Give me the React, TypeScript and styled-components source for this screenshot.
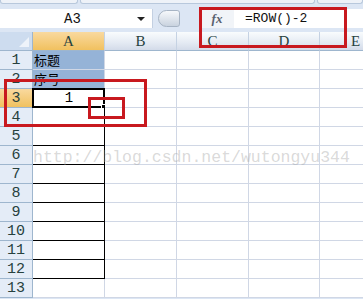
import styled, { createGlobalStyle } from "styled-components";

const GlobalStyle = createGlobalStyle`
  html, body {
    margin: 0;
    padding: 0;
    background: #ffffff;
  }
`;

const COLS = ["A", "B", "C", "D", "E"];
const ROWS = Array.from({ length: 13 }, (_, i) => i + 1);

const Frame = styled.div`
  position: relative;
  width: 363px;
  height: 299px;
  overflow: hidden;
  background: #dce6f4;
  font-family: "Liberation Mono", "DejaVu Sans Mono", monospace;
`;

const RibbonEdge = styled.div`
  display: flex;
  gap: 2px;
  height: 9px;
`;

const RibbonTab = styled.div<{ $w: number }>`
  width: ${(p) => p.$w}px;
  flex: ${(p) => (p.$w ? "none" : "1")};
  height: 3px;
  background: #eef2f8;
  border: 1px solid #b8c8dc;
  border-top: none;
  border-radius: 0 0 3px 3px;
`;

const FormulaBar = styled.div`
  display: flex;
  align-items: stretch;
  height: 19px;
`;

const NameBox = styled.div`
  width: 152px;
  display: flex;
  align-items: center;
  background: #ffffff;
  border-right: 1px solid #c3d0e2;
  font-size: 14px;
  color: #111;
`;

const NameText = styled.span`
  flex: 1;
  text-align: center;
  padding-left: 8px;
`;

const DropArrow = styled.span`
  width: 0;
  height: 0;
  margin-right: 7px;
  border-left: 4px solid transparent;
  border-right: 4px solid transparent;
  border-top: 4px solid #222;
`;

const Splitter = styled.div`
  width: 22px;
  height: 17px;
  margin: 1px 0 0 5px;
  border-radius: 9px 3px 3px 9px;
  background: linear-gradient(#f6f8fb, #c9d3df);
  border: 1px solid #a7b4c4;
  box-sizing: border-box;
`;

const FxButton = styled.div`
  width: 34px;
  margin-left: 20px;
  display: flex;
  align-items: center;
  justify-content: center;
  background: #f1f4f8;
  font-family: "Liberation Serif", serif;
  font-style: italic;
  font-weight: bold;
  font-size: 13px;
  color: #5a6270;
`;

const FormulaInput = styled.div`
  flex: 1;
  display: flex;
  align-items: center;
  padding-left: 11px;
  background: #ffffff;
  font-size: 13px;
  color: #111;
`;

const Gap = styled.div`
  height: 4px;
`;

const Sheet = styled.div`
  display: grid;
  grid-template-columns: 33px 72px 72px 72px 71px 72px;
  grid-auto-rows: 19px;
  background: #ffffff;
`;

const Corner = styled.div`
  position: relative;
  box-sizing: border-box;
  background: #cddcef;
  border-right: 1px solid #9eb6ce;
  border-bottom: 1px solid #9eb6ce;

  &::after {
    content: "";
    position: absolute;
    right: 3px;
    bottom: 3px;
    width: 10px;
    height: 10px;
    background: #eef3fa;
    clip-path: polygon(100% 0, 100% 100%, 0 100%);
  }
`;

const ColHeader = styled.div<{ $active?: boolean }>`
  box-sizing: border-box;
  display: flex;
  align-items: center;
  justify-content: center;
  font-family: "Liberation Serif", serif;
  font-size: 15px;
  color: #27413e;
  background: ${(p) =>
    p.$active
      ? "linear-gradient(#f9d99f, #f1c15f)"
      : "linear-gradient(#f9fcfd, #e4eaf3 60%, #d3dbe9)"};
  border-right: 1px solid #c5d2e3;
  border-bottom: 1px solid #9eb6ce;
`;

const RowHeader = styled.div<{ $active?: boolean }>`
  box-sizing: border-box;
  display: flex;
  align-items: center;
  justify-content: center;
  font-size: 15px;
  color: #27413e;
  background: ${(p) =>
    p.$active ? "linear-gradient(#f9d99f, #f1c15f)" : "#e4ecf7"};
  border-right: 1px solid #9eb6ce;
  border-bottom: 1px solid #9eb6ce;
`;

const Cell = styled.div<{ $fill?: string; $boxed?: boolean; $align?: string }>`
  position: relative;
  box-sizing: border-box;
  display: flex;
  align-items: center;
  justify-content: ${(p) => p.$align || "flex-start"};
  padding-left: 1px;
  color: #000;
  background: ${(p) => p.$fill || "#ffffff"};
  border-right: 1px solid ${(p) => (p.$boxed ? "#000" : "#d0d7e5")};
  border-bottom: 1px solid ${(p) => (p.$boxed ? "#000" : "#d0d7e5")};
`;

const CellText = styled.span`
  font-family: "Noto Sans CJK SC", sans-serif;
  font-size: 13px;
  line-height: 18px;
`;

const Selection = styled.div`
  position: absolute;
  left: -1px;
  top: -1px;
  right: -1px;
  bottom: -1px;
  border: 2px solid #000;
  pointer-events: none;

  &::after {
    content: "";
    position: absolute;
    right: -4px;
    bottom: -4px;
    width: 4px;
    height: 4px;
    background: #000;
    border: 1px solid #fff;
  }
`;

const CellValue = styled.span`
  font-family: "Liberation Mono", monospace;
  font-size: 14px;
`;

const Watermark = styled.div`
  position: absolute;
  left: 33px;
  top: 148px;
  font-family: "Liberation Mono", monospace;
  font-size: 16.5px;
  color: rgba(160, 160, 160, 0.4);
  white-space: nowrap;
  pointer-events: none;
`;

const Mark = styled.div<{ $x: number; $y: number; $w: number; $h: number }>`
  position: absolute;
  left: ${(p) => p.$x}px;
  top: ${(p) => p.$y}px;
  width: ${(p) => p.$w}px;
  height: ${(p) => p.$h}px;
  box-sizing: border-box;
  border: 3px solid #c8191f;
  pointer-events: none;
`;

function cellFor(row: number, col: string) {
  const key = col + row;
  if (col === "A") {
    if (row === 1)
      return (
        <Cell key={key} $fill="#95b3d7">
          <CellText>标题</CellText>
        </Cell>
      );
    if (row === 2)
      return (
        <Cell key={key} $fill="#95b3d7">
          <CellText>序号</CellText>
        </Cell>
      );
    if (row === 3)
      return (
        <Cell key={key} $boxed $align="center">
          <CellValue>1</CellValue>
          <Selection />
        </Cell>
      );
    if (row <= 12) return <Cell key={key} $boxed />;
  }
  return <Cell key={key} />;
}

export default function App() {
  return (
    <>
      <GlobalStyle />
      <Frame>
        <RibbonEdge>
          <RibbonTab $w={76} />
          <RibbonTab $w={233} />
          <RibbonTab $w={0} />
        </RibbonEdge>
        <FormulaBar>
          <NameBox>
            <NameText>A3</NameText>
            <DropArrow />
          </NameBox>
          <Splitter />
          <FxButton>fx</FxButton>
          <FormulaInput>=ROW()-2</FormulaInput>
        </FormulaBar>
        <Gap />
        <Sheet>
          <Corner />
          {COLS.map((c) => (
            <ColHeader key={c} $active={c === "A"}>
              {c}
            </ColHeader>
          ))}
          {ROWS.map((r) => [
            <RowHeader key={"r" + r} $active={r === 3}>
              {r}
            </RowHeader>,
            ...COLS.map((c) => cellFor(r, c)),
          ])}
        </Sheet>
        <Watermark>http://blog.csdn.net/wutongyu344</Watermark>
        <Mark $x={199} $y={7} $w={148} $h={41} />
        <Mark $x={4} $y={79} $w={143} $h={48} />
        <Mark $x={88} $y={97} $w={37} $h={22} />
      </Frame>
    </>
  );
}
